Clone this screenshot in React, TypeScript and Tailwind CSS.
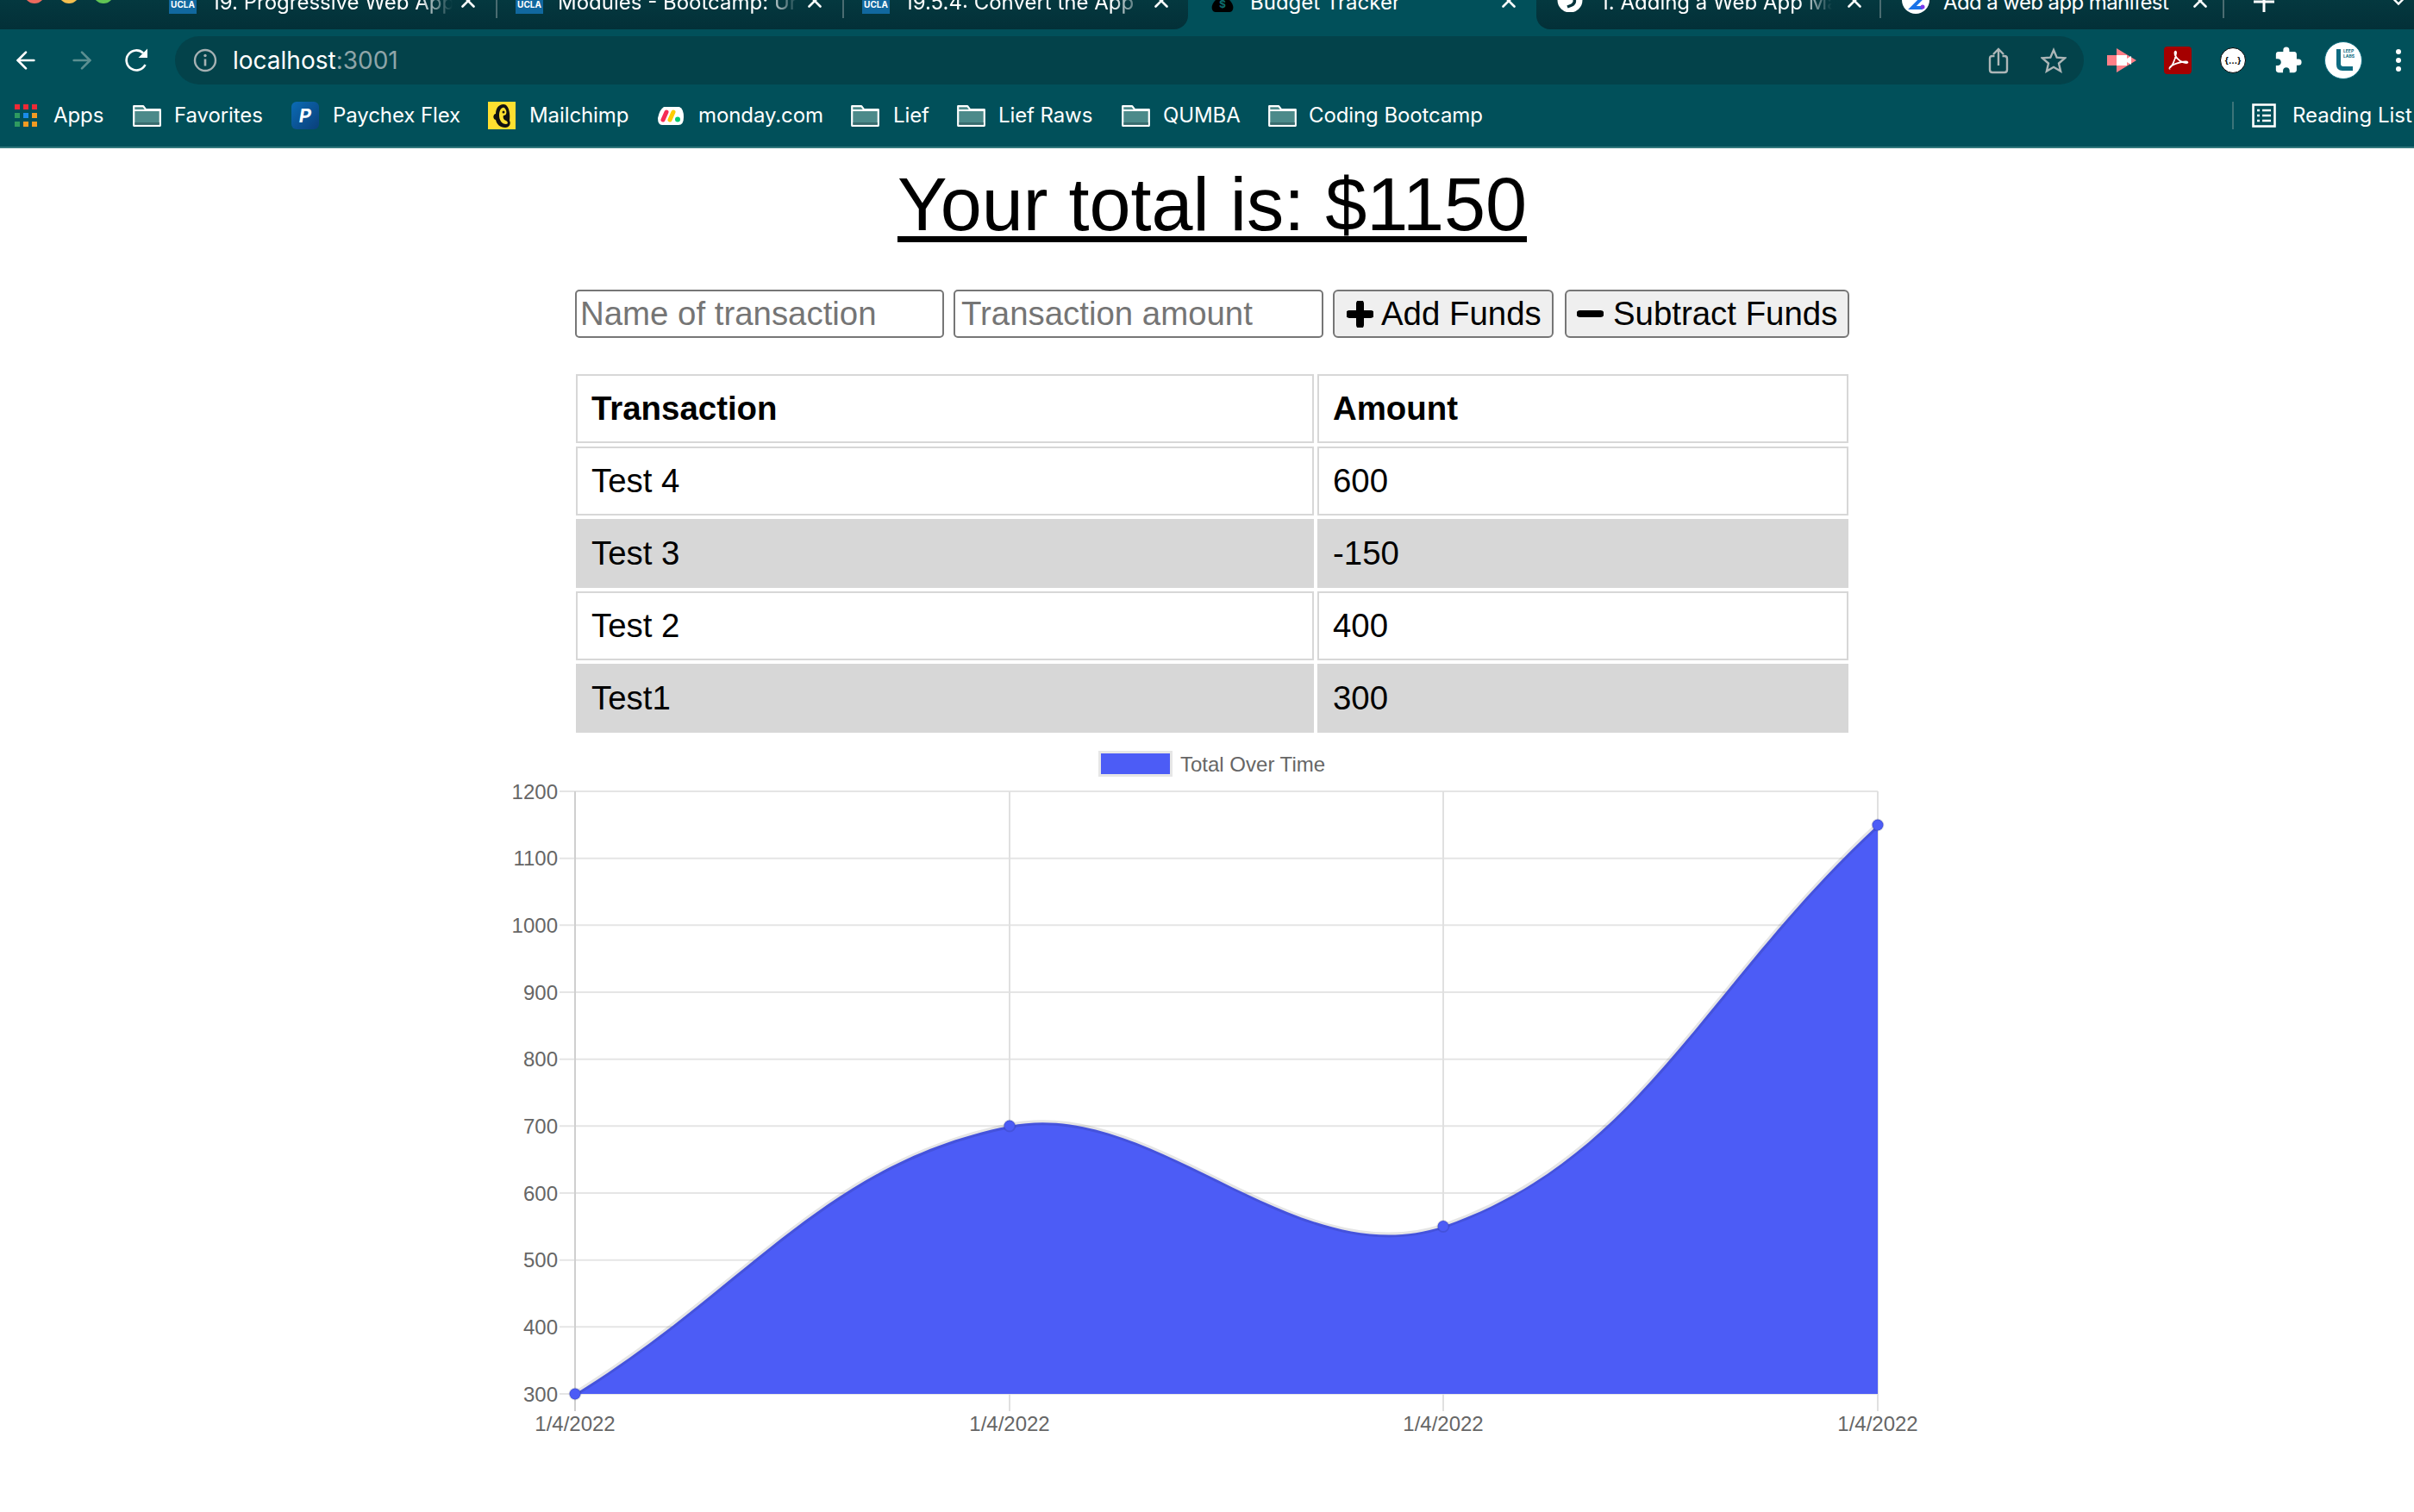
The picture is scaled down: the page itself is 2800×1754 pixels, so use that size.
import React from "react";
import { ArrowLeft, ArrowRight } from "lucide-react";
import { MdExtension } from "react-icons/md";

const UI = "font-['Inter','Liberation_Sans',sans-serif]";
const PAGE = "font-['Liberation_Sans',Arial,sans-serif]";

function CloseX() {
  return (
    <svg width="16" height="16" viewBox="0 0 16 16" className="shrink-0 mt-[-7px]">
      <path d="M1.5 1.5 14.5 14.5M14.5 1.5 1.5 14.5" stroke="#ffffff" strokeWidth="2.6" strokeLinecap="round" />
    </svg>
  );
}

function Ucla() {
  return (
    <div className="w-[32px] h-[16px] bg-[#11689f] shrink-0 overflow-hidden flex items-end justify-center">
      <span className="text-[10px] leading-[10px] font-bold text-white mb-[6px]">UCLA</span>
    </div>
  );
}

function Tab({ icon, title, w, textW, iconW = 32, left, gap, fade = true, sep = true, closeGap, tight = false }: { icon: React.ReactNode; title: string; w: number; textW: number; iconW?: number; left: number; gap: number; fade?: boolean; sep?: boolean; closeGap: number; tight?: boolean }) {
  return (
    <div className="flex items-start h-[34px] shrink-0 relative" style={{ width: w, paddingLeft: left }}>
      <div className="shrink-0" style={{ width: iconW }}>{icon}</div>
      <div
        className={
          "overflow-hidden whitespace-nowrap text-white text-[24px] leading-[30px] mt-[-12px] shrink-0 " +
          (fade ? "[mask-image:linear-gradient(to_right,black_86%,transparent)] " : "") +
          (tight ? "tracking-[-0.6px]" : "")
        }
        style={{ marginLeft: gap, width: textW }}
      >
        {title}
      </div>
      <div className="shrink-0" style={{ marginLeft: closeGap }}><CloseX /></div>
      {sep && <div className="absolute right-[1px] top-0 w-[2px] h-[21px] bg-[#4b6c71]" />}
    </div>
  );
}

function Folder() {
  return (
    <svg width="33" height="25" viewBox="0 0 33 25" className="shrink-0">
      <path d="M1.2 23.8V1.2h11l3 4h16.6v18.6z" fill="#4c8a8a" stroke="#ffffff" strokeWidth="2.2" strokeLinejoin="round" />
      <rect x="2.4" y="20" width="28.4" height="2.8" fill="#386a6d" />
      <path d="M1.5 6h30" stroke="#ffffff" strokeWidth="2" />
    </svg>
  );
}

function Bookmark({ w, icon, label, slot = 48 }: { w?: number; icon: React.ReactNode; label: string; slot?: number }) {
  return (
    <div className="flex items-center shrink-0" style={{ width: w }}>
      <div className="shrink-0 flex items-center" style={{ width: slot }}>{icon}</div>
      <span className="text-white text-[24px] leading-[30px] whitespace-nowrap tracking-[-0.1px]">{label}</span>
    </div>
  );
}

function AppsGrid() {
  const colors = ["#ee2a36", "#ee2a36", "#ee2a36", "#2f9a60", "#1a8ceb", "#f29a22", "#2f9a60", "#f29a22", "#f29a22"];
  return (
    <div className="grid grid-cols-[6px_6px_6px] gap-[4px] w-[26px]">
      {colors.map((c, i) => (
        <div key={i} className="w-[6px] h-[6px]" style={{ backgroundColor: c }} />
      ))}
    </div>
  );
}

function PlusIcon() {
  return (
    <svg width="31" height="31" viewBox="0 0 31 31" className="shrink-0">
      <path d="M15.5 3v25M3 15.5h25" stroke="#000000" strokeWidth="9" strokeLinecap="round" />
    </svg>
  );
}

function MinusIcon() {
  return (
    <svg width="31" height="31" viewBox="0 0 31 31" className="shrink-0">
      <path d="M3.5 15h24" stroke="#000000" strokeWidth="8" strokeLinecap="round" />
    </svg>
  );
}

const yTicks = [1200, 1100, 1000, 900, 800, 700, 600, 500, 400, 300];
const yOf = (v: number) => 918 + ((1200 - v) / 900) * 699;
const xs = [667, 1171, 1674, 2178];
const curve = "M667 1617C868.6 1492.6 956 1349 1171 1306C1339 1272 1501 1480 1674 1422.5C1903.8 1342.9 1976.4 1143.2 2178 957";
const pts: [number, number][] = [[667, 1617], [1171, 1306], [1674, 1422.5], [2178, 957]];

function Chart() {
  return (
    <svg width="1740" height="820" viewBox="560 860 1740 820" className={"block ml-[560px] mt-[6px] " + PAGE}>
      <rect x="1275.5" y="872.5" width="83" height="27" fill="#4c5cf6" stroke="#e6e6e6" strokeWidth="3" />
      <text x="1369" y="886" fontSize="24" fill="#666666" dominantBaseline="central">Total Over Time</text>
      {yTicks.map((v) => (
        <g key={v}>
          <line x1="649" x2="2178" y1={yOf(v)} y2={yOf(v)} stroke="#e5e5e5" strokeWidth="2" />
          <text x="647" y={yOf(v)} fontSize="24" fill="#666666" textAnchor="end" dominantBaseline="central">{v}</text>
        </g>
      ))}
      {xs.map((x, i) => (
        <g key={x}>
          <line x1={x} x2={x} y1="918" y2="1637" stroke={i === 0 ? "#cfcfcf" : "#e0e0e0"} strokeWidth="2" />
          <text x={x} y="1651" fontSize="24" fill="#666666" textAnchor="middle" dominantBaseline="central">1/4/2022</text>
        </g>
      ))}
      <path d={curve + "V1617H667Z"} fill="#4c5cf6" />
      <path d={curve} fill="none" stroke="#000000" strokeOpacity="0.1" strokeWidth="6" />
      {pts.map(([x, y]) => (
        <circle key={x} cx={x} cy={y} r="6.5" fill="#4c5cf6" stroke="#000000" strokeOpacity="0.1" strokeWidth="2" />
      ))}
    </svg>
  );
}

const rows = [
  ["Test 4", "600", false],
  ["Test 3", "-150", true],
  ["Test 2", "400", false],
  ["Test1", "300", true],
] as const;

export default function App() {
  return (
    <div className="w-[2800px] h-[1754px] bg-white overflow-hidden">
      <header className={"bg-[#01505a] " + UI}>
        {/* tab strip */}
        <div className="flex h-[34px] overflow-hidden">
          <div className="flex w-[1378px] h-[34px] bg-gradient-to-b from-[#04383f] to-[#033038] rounded-br-[16px] shrink-0 relative">
            <div className="flex w-[176px] shrink-0 h-[34px] items-start">
              <span className="w-[24px] h-[24px] rounded-full bg-[#ed6a5e] ml-[28px] mt-[-20px]" />
              <span className="w-[24px] h-[24px] rounded-full bg-[#f4bf4f] ml-[16px] mt-[-20px]" />
              <span className="w-[24px] h-[24px] rounded-full bg-[#61c554] ml-[16px] mt-[-20px]" />
            </div>
            <Tab w={402} left={20} gap={17} textW={280} closeGap={10} icon={<Ucla />} title="19. Progressive Web App" />
            <Tab w={402} left={20} gap={17} textW={280} closeGap={10} icon={<Ucla />} title="Modules - Bootcamp: Ur" />
            <Tab w={398} left={20} gap={17} textW={280} closeGap={10} sep={false} icon={<Ucla />} title="19.5.4: Convert the App" />
          </div>
          <Tab
            w={404}
            left={27}
            gap={19}
            textW={280}
            iconW={26}
            fade={false}
            sep={false}
            closeGap={12}
            title="Budget Tracker"
            icon={
              <svg width="26" height="14" viewBox="0 0 26 14">
                <path d="M5 0H21C25 4 26 8 25 11Q24 14 21 14H5Q2 14 1 11C0 8 1 4 5 0Z" fill="#000000" />
                <text x="13" y="9" fontSize="12" fontWeight="700" textAnchor="middle" fill="#0c6c6c">$</text>
              </svg>
            }
          />
          <div className="flex flex-1 h-[34px] bg-gradient-to-b from-[#04383f] to-[#033038] rounded-bl-[16px] relative">
            <Tab
              w={401}
              left={24}
              gap={20}
              textW={269}
              iconW={30}
              closeGap={18}
              title="1. Adding a Web App Ma"
              icon={
                <svg width="30" height="14" viewBox="0 0 30 14">
                  <circle cx="15" cy="0" r="14.5" fill="#ffffff" />
                  <path d="M17 -4C22 -1 21 4 17 6L12 8" fill="none" stroke="#03323a" strokeWidth="3.5" />
                </svg>
              }
            />
            <Tab
              w={398}
              left={23}
              gap={16}
              textW={272}
              closeGap={18}
              fade={false}
              tight
              title="Add a web app manifest"
              icon={
                <svg width="32" height="16" viewBox="0 0 32 16">
                  <circle cx="16" cy="0" r="16" fill="#ffffff" />
                  <path d="M8 -2H23L12 9H24" fill="none" stroke="#1a73e8" strokeWidth="4" />
                  <circle cx="24" cy="8" r="2.5" fill="#7c3aed" />
                </svg>
              }
            />
            <svg width="24" height="24" viewBox="0 0 24 24" className="ml-[33px] mt-[-10px] shrink-0">
              <path d="M12 0v24M0 12h24" stroke="#ffffff" strokeWidth="3" />
            </svg>
            <svg width="16" height="10" viewBox="0 0 16 10" className="ml-[136px] mt-[-3px] shrink-0">
              <path d="M2 1.5 8 7.5 14 1.5" fill="none" stroke="#ffffff" strokeWidth="2.4" />
            </svg>
          </div>
        </div>

        {/* toolbar */}
        <div className="flex items-start h-[72px] pt-[8px]">
          <div className="ml-[10px] w-[40px] h-[56px] flex items-center justify-center shrink-0">
            <ArrowLeft size={32} color="#ffffff" strokeWidth={2} />
          </div>
          <div className="ml-[25px] w-[40px] h-[56px] flex items-center justify-center shrink-0">
            <ArrowRight size={32} color="#5c8f91" strokeWidth={2} />
          </div>
          <div className="ml-[24px] w-[40px] h-[56px] flex items-center justify-center shrink-0">
            <svg width="30" height="30" viewBox="0 0 30 30">
              <path d="M24.5 20A11.5 11.5 0 1 1 22 6.5" fill="none" stroke="#ffffff" strokeWidth="2.6" />
              <path d="M27 1.5V12H16.5z" fill="#ffffff" />
            </svg>
          </div>
          <div className="ml-[24px] w-[2214px] h-[56px] rounded-full bg-[#03424a] flex items-center pl-[21px] pr-[20px] shrink-0">
            <svg width="28" height="28" viewBox="0 0 28 28" className="shrink-0">
              <circle cx="14" cy="14" r="12" fill="none" stroke="#a6b1b3" strokeWidth="2.4" />
              <path d="M14 12.5v8" stroke="#a6b1b3" strokeWidth="2.6" />
              <circle cx="14" cy="8.5" r="1.7" fill="#a6b1b3" />
            </svg>
            <div className="ml-[18px] text-[28px] leading-[34px]">
              <span className="text-white">localhost</span>
              <span className="text-[#8fa5a8]">:3001</span>
            </div>
            <div className="flex-1" />
            <svg width="28" height="32" viewBox="0 0 28 32" className="shrink-0 mr-[35px]">
              <path d="M8 11H5.5Q2.5 11 2.5 14V27Q2.5 30 5.5 30H19.5Q22.5 30 22.5 27V14Q22.5 11 19.5 11H17" fill="none" stroke="#adb6b7" strokeWidth="2.4" transform="translate(1.5 0)" />
              <path d="M14 22V3M8 9l6-6 6 6" fill="none" stroke="#adb6b7" strokeWidth="2.4" />
            </svg>
            <svg width="30" height="30" viewBox="0 0 30 30" className="shrink-0">
              <path d="M15 3 18.7 11.6 28 12.4 21 18.5 23.1 27.6 15 22.8 6.9 27.6 9 18.5 2 12.4 11.3 11.6Z" fill="none" stroke="#adb6b7" strokeWidth="2.4" strokeLinejoin="miter" />
            </svg>
          </div>
          <div className="h-[56px] flex items-center shrink-0">
            <svg width="34" height="28" viewBox="0 0 34 28" className="ml-[27px] shrink-0">
              <path d="M0 8H11V0L34 14 11 28V20H0Z" fill="#ff7f87" />
              <rect x="11" y="8" width="12" height="12" fill="#ffffff" />
              <path d="M23 12 28 9V19L23 16Z" fill="#ffffff" />
            </svg>
            <div className="ml-[32px] w-[32px] h-[32px] rounded-[4px] bg-[#a50000] shrink-0 flex items-center justify-center">
              <svg width="26" height="26" viewBox="0 0 26 26">
                <path d="M3 22C6 21 10 13 11 5 11.5 2 9.5 2 9.5 4.5 9.5 9 16 16 23 16 25 16 25 14.500 22 14.500 16 14.500 6 18 4 21 3 22.500 3.500 23 4 22.500" fill="none" stroke="#ffffff" strokeWidth="1.8" />
              </svg>
            </div>
            <div className="ml-[33px] w-[30px] h-[30px] rounded-full bg-white border border-black shrink-0 flex items-center justify-center text-black text-[10px] leading-[10px] font-bold whitespace-nowrap">
              {"{…}"}
            </div>
            <div className="ml-[32px] w-[34px] flex justify-center shrink-0">
              <MdExtension size={34} color="#ffffff" />
            </div>
            <div className="ml-[25px] w-[44px] h-[44px] rounded-full bg-white border border-[#0f6d7f] shrink-0 flex items-center justify-center">
              <svg width="30" height="30" viewBox="0 0 30 30">
                <path d="M7 2h5v17q0 3 3 3h11v5H14Q7 27 7 20Z" fill="#0d6a80" />
                <text x="15" y="6" fontSize="5" fontWeight="700" fill="#0d6a80">LEEP</text>
                <text x="15" y="12" fontSize="5" fontWeight="700" fill="#0d6a80">LABS</text>
              </svg>
            </div>
            <div className="ml-[39px] w-[8px] flex flex-col gap-[4px] shrink-0">
              <span className="w-[6px] h-[6px] rounded-full bg-white" />
              <span className="w-[6px] h-[6px] rounded-full bg-white" />
              <span className="w-[6px] h-[6px] rounded-full bg-white" />
            </div>
          </div>
        </div>

        {/* bookmarks */}
        <div className="flex items-center h-[66px] pb-[8px] pl-[17px] border-b-2 border-[#33797d] overflow-hidden">
          <Bookmark w={137} slot={45} icon={<AppsGrid />} label="Apps" />
          <Bookmark w={184} icon={<Folder />} label="Favorites" />
          <Bookmark
            w={228}
            icon={
              <div className="w-[32px] h-[32px] rounded-[6px] bg-gradient-to-br from-[#0a6cb5] to-[#0a3f7a] flex items-center justify-center text-white font-bold italic text-[22px] leading-[22px]">
                P
              </div>
            }
            label="Paychex Flex"
          />
          <Bookmark
            w={196}
            icon={
              <svg width="32" height="32" viewBox="0 0 32 32">
                <rect width="32" height="32" fill="#ffdf30" />
                <path d="M18 3C12 3 9 8 9 14 6 14 5 20 9 21 10 26 14 30 20 30 25 30 27 25 25 22 26 16 25 3 18 3Z" fill="#111111" />
                <path d="M17 7C14 8 13 12 13 16 13 21 16 26 21 26 24 26 23 23 21 22 18 21 17 18 18 16 21 16 22 13 21 10 20 8 19 6 17 7Z" fill="#ffdf30" />
                <circle cx="18" cy="12" r="1.500" fill="#111111" />
              </svg>
            }
            label="Mailchimp"
          />
          <Bookmark
            w={225}
            icon={
              <svg width="32" height="24" viewBox="0 0 32 24">
                <path d="M8 2H26Q31 4 31 14 31 23 25 23H6Q1 23 1 15 3 5 8 2Z" fill="#ffffff" />
                <path d="M7 17 11 8" stroke="#f62b54" strokeWidth="5" strokeLinecap="round" />
                <path d="M15 17 19 8" stroke="#ffcc00" strokeWidth="5" strokeLinecap="round" />
                <circle cx="24" cy="16.500" r="3" fill="#00ca72" />
              </svg>
            }
            label="monday.com"
          />
          <Bookmark w={123} slot={49} icon={<Folder />} label="Lief" />
          <Bookmark w={191} slot={48} icon={<Folder />} label="Lief Raws" />
          <Bookmark w={170} icon={<Folder />} label="QUMBA" />
          <Bookmark slot={47} icon={<Folder />} label="Coding Bootcamp" />
          <div className="flex-1" />
          <div className="flex items-center w-[211px] shrink-0">
            <div className="w-[2px] h-[32px] bg-[#3c7479] shrink-0" />
            <svg width="28" height="28" viewBox="0 0 28 28" className="ml-[21px] shrink-0">
              <rect x="1.500" y="1.500" width="25" height="25" fill="none" stroke="#ffffff" strokeWidth="2.6" />
              <path d="M6 8h3M12 8h10M6 14h3M12 14h10M6 20h3M12 20h10" stroke="#ffffff" strokeWidth="2.4" />
            </svg>
            <span className="ml-[19px] text-white text-[24px] leading-[30px] whitespace-nowrap">Reading List</span>
          </div>
        </div>
      </header>

      <main className={"w-[1484px] ml-[664px] text-black " + PAGE}>
        <h1 className="text-center text-[86.4px] leading-[100px] font-normal underline decoration-[7px] underline-offset-[7px] mt-[15px] mb-[49px]">
          Your total is: $1150
        </h1>
        <form className="flex items-stretch h-[56px] pl-[3px] text-[38.4px]">
          <input
            readOnly
            placeholder="Name of transaction"
            className="w-[428px] h-[56px] border-2 border-[#767676] rounded-[5px] px-[4px] bg-white placeholder:text-[#757575]"
          />
          <input
            readOnly
            placeholder="Transaction amount"
            className="w-[429px] h-[56px] ml-[11px] border-2 border-[#767676] rounded-[5px] pl-[7px] pr-[4px] bg-white placeholder:text-[#757575]"
          />
          <button type="button" className="ml-[11px] w-[256px] h-[56px] border-2 border-[#767676] rounded-[6px] bg-[#efefef] flex items-center pl-[14px] whitespace-nowrap">
            <PlusIcon />
            <span className="ml-[9px]">Add Funds</span>
          </button>
          <button type="button" className="ml-[13px] w-[330px] h-[56px] border-2 border-[#767676] rounded-[6px] bg-[#efefef] flex items-center pl-[12px] whitespace-nowrap">
            <MinusIcon />
            <span className="ml-[11px]">Subtract Funds</span>
          </button>
        </form>
        <table className="mt-[38px] w-[1484px] table-fixed border-separate [border-spacing:4px] text-[38.4px]">
          <colgroup>
            <col className="w-[856px]" />
            <col className="w-[616px]" />
          </colgroup>
          <thead>
            <tr className="h-[80px]">
              <th className="border-2 border-[#d7d7d7] px-[16px] text-left font-bold">Transaction</th>
              <th className="border-2 border-[#d7d7d7] px-[16px] text-left font-bold">Amount</th>
            </tr>
          </thead>
          <tbody>
            {rows.map(([name, amount, shaded]) => (
              <tr key={name} className="h-[80px]">
                <td className={"border-2 border-[#d7d7d7] px-[16px] " + (shaded ? "bg-[#d7d7d7]" : "")}>{name}</td>
                <td className={"border-2 border-[#d7d7d7] px-[16px] " + (shaded ? "bg-[#d7d7d7]" : "")}>{amount}</td>
              </tr>
            ))}
          </tbody>
        </table>
      </main>
      <Chart />
    </div>
  );
}
